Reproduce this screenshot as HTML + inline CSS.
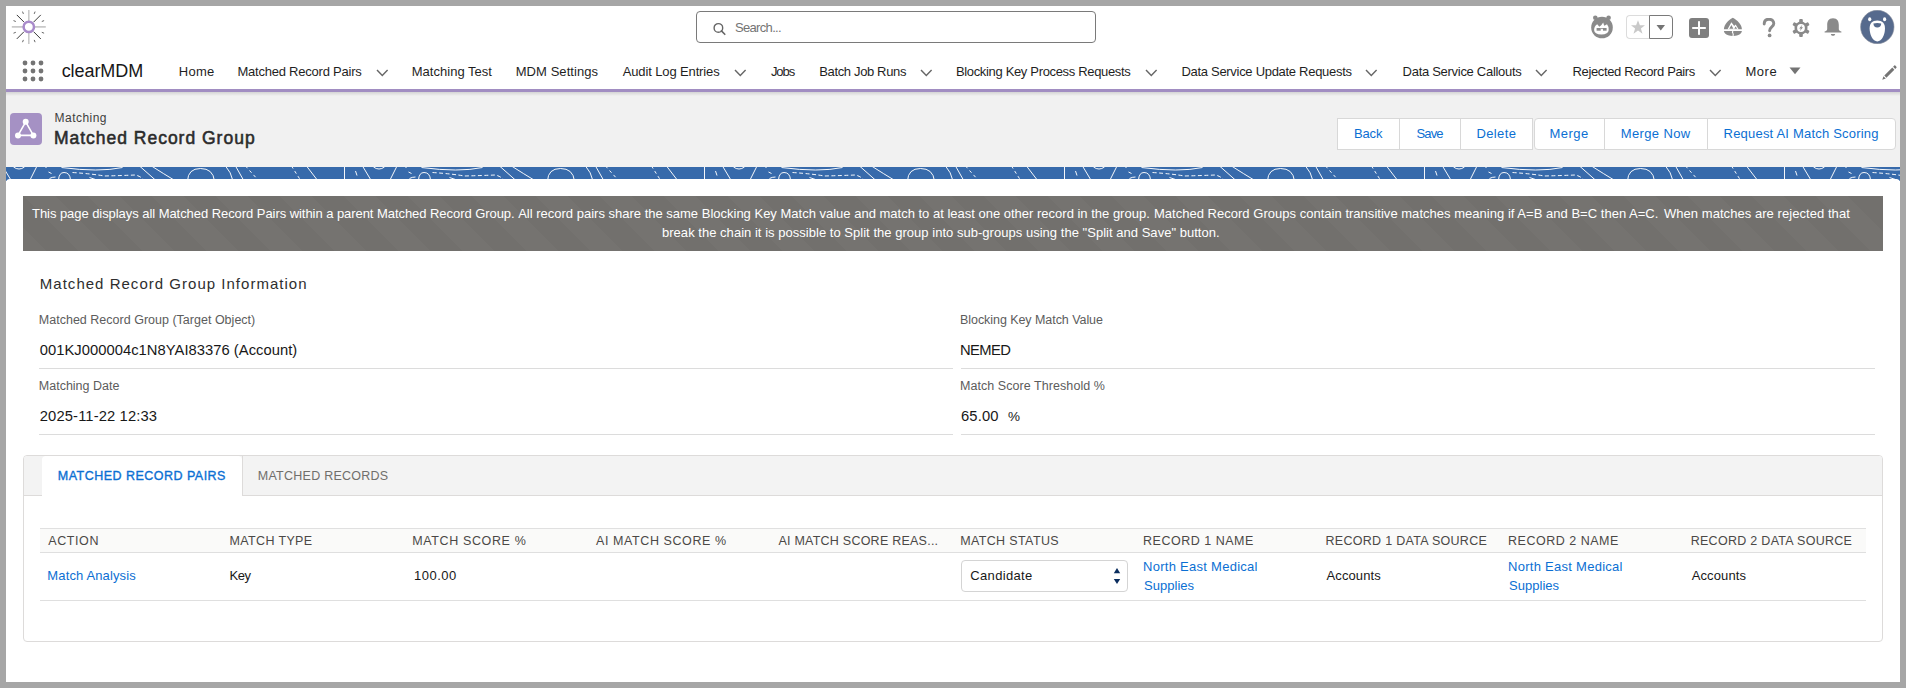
<!DOCTYPE html>
<html><head><meta charset="utf-8">
<style>
html,body{margin:0;padding:0;}
body{width:1906px;height:688px;position:relative;overflow:hidden;background:#ffffff;font-family:"Liberation Sans",sans-serif;}
.a{position:absolute;}
.t{position:absolute;white-space:nowrap;line-height:1;font-family:"Liberation Sans",sans-serif;}
#frame{position:absolute;left:0;top:0;width:1906px;height:688px;box-sizing:border-box;border:6px solid #a6a6a6;z-index:50;pointer-events:none;}
.chev{position:absolute;width:13px;height:8px;}
.btn{position:absolute;top:118px;height:32px;background:#fff;border:1px solid #d8d8d8;box-sizing:border-box;}
</style></head>
<body>
<!-- header -->
<div class="a" style="left:0;top:0;width:1906px;height:89px;background:#fff"></div>
<svg class="a" style="left:8px;top:7px" width="42" height="42" viewBox="0 0 42 42">
  <g transform="translate(20.8,19.9)">
    <line x1="0" y1="-17" x2="0" y2="17" stroke="#c9c9c9" stroke-width="1.6"/>
    <line x1="-17" y1="0" x2="17" y2="0" stroke="#c9c9c9" stroke-width="1.6"/>
    <g stroke="#3a3a3a" stroke-width="1">
      <line x1="-4.8" y1="-4.8" x2="-12" y2="-12"/><line x1="4.8" y1="-4.8" x2="12" y2="-12"/>
      <line x1="-4.8" y1="4.8" x2="-12" y2="12"/><line x1="4.8" y1="4.8" x2="12" y2="12"/>
    </g>
    <g stroke="#555" stroke-width="0.9">
      <line x1="-5.4" y1="-13" x2="-6.3" y2="-15.3"/><line x1="5.4" y1="-13" x2="6.3" y2="-15.3"/>
      <line x1="-5.4" y1="13" x2="-6.3" y2="15.3"/><line x1="5.4" y1="13" x2="6.3" y2="15.3"/>
      <line x1="-13" y1="-5.4" x2="-15.3" y2="-6.3"/><line x1="13" y1="-5.4" x2="15.3" y2="-6.3"/>
      <line x1="-13" y1="5.4" x2="-15.3" y2="6.3"/><line x1="13" y1="5.4" x2="15.3" y2="6.3"/>
    </g>
    <circle cx="0" cy="0" r="5.2" fill="#fff" stroke="#a98bcb" stroke-width="2.5"/>
  </g>
</svg>
<!-- search -->
<div class="a" style="left:696px;top:11px;width:400px;height:32px;box-sizing:border-box;border:1px solid #7a7a7a;border-radius:4px;background:#fff"></div>
<svg class="a" style="left:712px;top:22px" width="16" height="14" viewBox="0 0 16 14">
  <circle cx="6.4" cy="5.9" r="4.3" fill="none" stroke="#666" stroke-width="1.4"/>
  <line x1="9.4" y1="8.9" x2="12.8" y2="12.3" stroke="#666" stroke-width="1.6" stroke-linecap="round"/>
</svg>
<!-- right icons -->
<svg class="a" style="left:1588px;top:12px" width="28" height="28" viewBox="0 0 28 28">
  <circle cx="7.3" cy="5.8" r="2.3" fill="#8a8a8a"/><circle cx="20.6" cy="5.8" r="2.3" fill="#8a8a8a"/>
  <circle cx="14" cy="15.5" r="10.8" fill="#8a8a8a"/>
  <path d="M6.1 18 Q6.3 13.8 9.2 12.3 L11.4 14.7 Q13.6 13.6 15.2 10.6 Q15.8 13 16.4 13.8 L19 12.3 Q20.9 14.5 20.7 18 Q20.3 22.4 13.4 22.6 Q6.4 22.4 6.1 18Z" fill="#fff"/>
  <rect x="8.6" y="16" width="4.1" height="2.7" fill="#8a8a8a"/><rect x="15" y="16" width="3.6" height="2.7" fill="#8a8a8a"/>
  <rect x="12.5" y="16.2" width="2.6" height="0.9" fill="#8a8a8a"/>
</svg>
<div class="a" style="left:1626px;top:15px;width:24px;height:24px;box-sizing:border-box;border:1px solid #dcdcdc;border-right:none;border-radius:4px 0 0 4px;background:#fff"></div>
<div class="a" style="left:1649px;top:15px;width:24px;height:24px;box-sizing:border-box;border:1px solid #7a7a7a;border-radius:0 4px 4px 0;background:#fff"></div>
<svg class="a" style="left:1630px;top:19px" width="16" height="16" viewBox="0 0 16 16">
  <path d="M8 1.2 L9.9 6.3 L15 6.3 L10.9 9.6 L12.5 14.8 L8 11.6 L3.5 14.8 L5.1 9.6 L1 6.3 L6.1 6.3Z" fill="#c9c9c9"/>
</svg>
<svg class="a" style="left:1656px;top:25px" width="10" height="6" viewBox="0 0 10 6"><path d="M0.5 0 L9 0 L4.8 5.5Z" fill="#747474"/></svg>
<svg class="a" style="left:1689px;top:18px" width="20" height="20" viewBox="0 0 20 20">
  <rect x="0" y="0" width="20" height="20" rx="3" fill="#7f7f7f"/>
  <rect x="3.2" y="9" width="13.6" height="2" fill="#fff"/><rect x="9" y="3.2" width="2" height="13.6" fill="#fff"/>
</svg>
<svg class="a" style="left:1719px;top:13px" width="28" height="28" viewBox="0 0 28 28">
  <path d="M13.8 4.8 C9 7.4 5.1 11.5 4.9 16.3 L22.9 16.3 C22.7 11.5 18.6 7.4 13.8 4.8Z" fill="#8a8a8a"/>
  <path d="M8.4 16.4 L12.4 9.3 L15.2 13.1 L16.6 11.5 L19.8 16.4Z" fill="#fff"/>
  <path d="M10.3 15.7 L12.4 11.9 L14.4 15.7Z M15.3 15.7 L16.6 13.5 L18.2 15.7Z" fill="#8a8a8a"/>
  <path d="M4.9 17.9 L13.3 17.9 L12.8 19.3 L13.7 21 L13.5 22.9 C8.4 22.7 5.3 20.6 4.9 17.9Z" fill="#8a8a8a"/>
  <path d="M22.9 17.9 L14.3 17.9 L14.1 19.4 L14.8 21.2 L14.6 22.9 C19.6 22.7 22.5 20.6 22.9 17.9Z" fill="#8a8a8a"/>
</svg>
<svg class="a" style="left:1761px;top:17.8px" width="16" height="20" viewBox="0 0 16 20">
  <path d="M3.2 6 C3.2 2.5 5.5 1.2 8 1.2 C10.8 1.2 12.8 3 12.8 5.6 C12.8 9 8.6 9 8.6 12.8" fill="none" stroke="#8a8a8a" stroke-width="2.9" stroke-linecap="round"/>
  <circle cx="8.6" cy="17.4" r="1.9" fill="#8a8a8a"/>
</svg>
<svg class="a" style="left:1792px;top:19px" width="18" height="18" viewBox="0 0 18 18">
  <g fill="#8a8a8a" transform="translate(9,9)">
    <circle r="6.5"/>
    <rect x="-1.8" y="-9" width="3.6" height="18" rx="1"/>
    <rect x="-1.8" y="-9" width="3.6" height="18" rx="1" transform="rotate(60)"/>
    <rect x="-1.8" y="-9" width="3.6" height="18" rx="1" transform="rotate(120)"/>
  </g>
  <circle cx="9" cy="9" r="3.9" fill="#fff"/>
  <path d="M10.3 5.8 L7.2 9.6 L8.9 9.6 L7.8 12.3 L11 8.3 L9.3 8.3Z" fill="#8a8a8a"/>
</svg>
<svg class="a" style="left:1823px;top:17px" width="20" height="20" viewBox="0 0 20 20">
  <path d="M10 1.2 C5.5 1.2 4.2 4.5 4.2 8 L4.2 12.2 C4.2 13.5 2.8 14.2 1.6 14.6 L1.6 15.6 L18.4 15.6 L18.4 14.6 C17.2 14.2 15.8 13.5 15.8 12.2 L15.8 8 C15.8 4.5 14.5 1.2 10 1.2Z" fill="#8a8a8a"/>
  <path d="M7.8 17 L12.2 17 C12 18.3 11 18.8 10 18.8 C9 18.8 8 18.3 7.8 17Z" fill="#8a8a8a"/>
</svg>
<svg class="a" style="left:1860px;top:10px" width="35" height="34" viewBox="0 0 35 34">
  <circle cx="17.3" cy="17" r="16.7" fill="#566a8d" stroke="#8a8f9c" stroke-width="0.6"/>
  <ellipse cx="9.7" cy="9.2" rx="1.6" ry="2" fill="#fff"/><ellipse cx="24.6" cy="9.2" rx="1.6" ry="2" fill="#fff"/>
  <path d="M17.3 10.6 C12.2 10.6 9.6 13.5 9.6 18.5 C9.6 24.5 12.8 31.4 17.3 31.4 C21.8 31.4 25 24.5 25 18.5 C25 13.5 22.4 10.6 17.3 10.6Z" fill="#fff"/>
  <path d="M13.4 13.6 Q17.3 12.4 21.2 13.6 Q21 17.6 17.3 17.6 Q13.6 17.6 13.4 13.6Z" fill="#566a8d"/>
</svg>
<!-- nav -->
<svg class="a" style="left:22px;top:60px" width="22" height="22" viewBox="0 0 22 22">
  <g fill="#747474">
    <circle cx="3" cy="3" r="2.4"/><circle cx="11" cy="3" r="2.4"/><circle cx="19" cy="3" r="2.4"/>
    <circle cx="3" cy="11" r="2.4"/><circle cx="11" cy="11" r="2.4"/><circle cx="19" cy="11" r="2.4"/>
    <circle cx="3" cy="19" r="2.4"/><circle cx="11" cy="19" r="2.4"/><circle cx="19" cy="19" r="2.4"/>
  </g>
</svg>
<svg class="a" style="left:375.6px;top:69px" width="13" height="8" viewBox="0 0 13 8"><path d="M1 1 L6.3 6.6 L11.6 1" fill="none" stroke="#666" stroke-width="1.4"/></svg>
<svg class="a" style="left:734.2px;top:69px" width="13" height="8" viewBox="0 0 13 8"><path d="M1 1 L6.3 6.6 L11.6 1" fill="none" stroke="#666" stroke-width="1.4"/></svg>
<svg class="a" style="left:919.9px;top:69px" width="13" height="8" viewBox="0 0 13 8"><path d="M1 1 L6.3 6.6 L11.6 1" fill="none" stroke="#666" stroke-width="1.4"/></svg>
<svg class="a" style="left:1145.1px;top:69px" width="13" height="8" viewBox="0 0 13 8"><path d="M1 1 L6.3 6.6 L11.6 1" fill="none" stroke="#666" stroke-width="1.4"/></svg>
<svg class="a" style="left:1365.0px;top:69px" width="13" height="8" viewBox="0 0 13 8"><path d="M1 1 L6.3 6.6 L11.6 1" fill="none" stroke="#666" stroke-width="1.4"/></svg>
<svg class="a" style="left:1534.8px;top:69px" width="13" height="8" viewBox="0 0 13 8"><path d="M1 1 L6.3 6.6 L11.6 1" fill="none" stroke="#666" stroke-width="1.4"/></svg>
<svg class="a" style="left:1708.7px;top:69px" width="13" height="8" viewBox="0 0 13 8"><path d="M1 1 L6.3 6.6 L11.6 1" fill="none" stroke="#666" stroke-width="1.4"/></svg>
<svg class="a" style="left:1789px;top:67px" width="12" height="8" viewBox="0 0 12 8"><path d="M0.5 0.5 L11.5 0.5 L6 7.2Z" fill="#747474"/></svg>
<svg class="a" style="left:1881px;top:65px" width="16" height="16" viewBox="0 0 16 16">
  <path d="M11.3 2.6 L13.4 4.7 L5.4 12.7 L3.3 10.6Z" fill="#747474"/><path d="M12.1 1.8 L13.3 0.6 Q13.8 0.1 14.3 0.6 L15.4 1.7 Q15.9 2.2 15.4 2.7 L14.2 3.9Z" fill="#747474"/>
  <path d="M2.4 11.2 L4.8 13.6 L1.3 14.8Z" fill="#747474"/>
</svg>
<div class="a" style="left:0;top:89px;width:1906px;height:3px;background:#a18dc2"></div>
<!-- page header bg -->
<div class="a" style="left:0;top:92px;width:1906px;height:75px;background:#f1f1f1"></div>
<div class="a" style="left:0;top:92px;width:1906px;height:4px;background:linear-gradient(rgba(0,0,0,0.12),rgba(0,0,0,0))"></div>
<svg class="a" style="left:10px;top:113px" width="32" height="32" viewBox="0 0 32 32">
  <rect width="32" height="32" rx="4" fill="#a591c4"/>
  <path d="M15.7 8.8 L8 22.4 L23.4 22.4Z" fill="none" stroke="#fff" stroke-width="1.6"/>
  <circle cx="15.7" cy="8.8" r="3" fill="#fff"/><circle cx="8" cy="22.4" r="3" fill="#fff"/><circle cx="23.4" cy="22.4" r="3" fill="#fff"/>
</svg>
<!-- buttons -->
<div class="btn" style="left:1337px;width:63px;"></div>
<div class="btn" style="left:1399px;width:62px;"></div>
<div class="btn" style="left:1460px;width:73px;"></div>
<div class="btn" style="left:1534px;width:71px;border-radius:4px 0 0 4px"></div>
<div class="btn" style="left:1604px;width:104px;"></div>
<div class="btn" style="left:1707px;width:189px;border-radius:0 4px 4px 0"></div>
<!-- brand band -->
<div class="a" style="left:0;top:167px;width:1906px;height:14px;background:#376aab;overflow:hidden">
<svg width="1906" height="14" style="position:absolute;left:0;top:0">
<defs><pattern id="topo" x="344" y="0" width="360" height="14" patternUnits="userSpaceOnUse">
<g fill="none" stroke="#ffffff" stroke-opacity="0.95" stroke-width="1">
<path d="M0.5 -1 L0.5 14"/>
<path d="M11.5 4 L13 8.5"/>
<path d="M18.5 -1 L27.5 14"/>
<path d="M29.5 0 Q35 4 40.5 0"/>
<path d="M53 -1 L45.5 14"/>
<path d="M62 -1 L62 1"/>
<path d="M64.5 5 L67.5 6.5"/>
<path d="M74.5 13 Q75 5.5 80 5.5 Q86 5.5 86.5 13"/>
<path d="M65.5 11.5 Q68 10 71.5 10"/>
<path d="M77.5 0.5 Q115 5.5 138.5 0.5"/>
<path d="M88.5 5.5 Q110 7 120 9 Q140 8.5 151.5 8 Q157 9.5 160 13" stroke-dasharray="4 2.5"/>
<path d="M105.5 10.5 L113 13"/>
<path d="M155.5 -1 L172.5 14"/>
<path d="M167.5 -1 Q180 7 190 13"/>
<path d="M203.5 14 Q204 1.5 216.5 1.5 Q229 1.5 230.5 14"/>
<path d="M241.5 -1 Q247 5 249 14"/>
<path d="M251.5 -1 L260 14"/>
<path d="M261.5 -1 L275 14" stroke-dasharray="3 3"/>
<path d="M307.5 -1 L317 14" stroke-dasharray="3 3"/>
<path d="M322.5 -1 L334 14"/>
</g></pattern></defs>
<rect x="0" y="0" width="1906" height="14" fill="url(#topo)"/>
</svg>

</div>
<!-- card -->
<div class="a" style="left:6px;top:179px;width:1894px;height:520px;background:#fff;border-radius:4px 4px 0 0"></div>
<!-- info box -->
<div class="a" style="left:23px;top:196px;width:1860px;height:55px;background-color:#72706d;background-image:linear-gradient(45deg,rgba(255,255,255,0.025) 25%,transparent 25%,transparent 50%,rgba(255,255,255,0.025) 50%,rgba(255,255,255,0.025) 75%,transparent 75%,transparent);background-size:64px 64px"></div>
<!-- field dividers -->
<div class="a" style="left:39px;top:368px;width:914px;height:1px;background:#dcdcdc"></div>
<div class="a" style="left:961px;top:368px;width:914px;height:1px;background:#dcdcdc"></div>
<div class="a" style="left:39px;top:434px;width:914px;height:1px;background:#dcdcdc"></div>
<div class="a" style="left:961px;top:434px;width:914px;height:1px;background:#dcdcdc"></div>
<!-- tabset -->
<div class="a" style="left:23px;top:455px;width:1860px;height:187px;box-sizing:border-box;border:1px solid #dddbda;border-radius:4px;background:#fff"></div>
<div class="a" style="left:24px;top:456px;width:1858px;height:39px;background:#f3f3f3;border-radius:3px 3px 0 0"></div>
<div class="a" style="left:24px;top:495px;width:1858px;height:1px;background:#dddbda"></div>
<div class="a" style="left:42px;top:456px;width:200px;height:40px;background:#fff;border-radius:4px 4px 0 0"></div>
<div class="a" style="left:242px;top:456px;width:1px;height:40px;background:#dddbda"></div>
<!-- table -->
<div class="a" style="left:40px;top:528px;width:1826px;height:1px;background:#e0e0e0"></div>
<div class="a" style="left:40px;top:529px;width:1826px;height:23px;background:#fafaf9"></div>
<div class="a" style="left:40px;top:552px;width:1826px;height:1px;background:#dfdfdf"></div>
<div class="a" style="left:40px;top:600px;width:1826px;height:1px;background:#dfdfdf"></div>
<!-- select -->
<div class="a" style="left:961px;top:560px;width:167px;height:32px;box-sizing:border-box;border:1px solid #d4d4d4;border-radius:4px;background:#fff"></div>
<svg class="a" style="left:1113px;top:567px" width="8" height="18" viewBox="0 0 8 18">
  <path d="M0.8 6.2 L7.2 6.2 L4 1Z" fill="#0a2d5e"/><path d="M0.8 11.9 L7.2 11.9 L4 17Z" fill="#0a2d5e"/>
</svg>
<div class="t" style="left:735.00px;top:21.39px;font-size:13px;color:#747474;letter-spacing:-0.677px">Search...</div>
<div class="t" style="left:61.70px;top:61.66px;font-size:18px;color:#181818;letter-spacing:-0.073px">clearMDM</div>
<div class="t" style="left:178.80px;top:64.79px;font-size:13px;color:#1f1f1f;letter-spacing:0.251px">Home</div>
<div class="t" style="left:237.40px;top:64.79px;font-size:13px;color:#1f1f1f;letter-spacing:-0.222px">Matched Record Pairs</div>
<div class="t" style="left:411.70px;top:64.79px;font-size:13px;color:#1f1f1f;letter-spacing:0.026px">Matching Test</div>
<div class="t" style="left:515.70px;top:64.79px;font-size:13px;color:#1f1f1f;letter-spacing:0.070px">MDM Settings</div>
<div class="t" style="left:622.70px;top:64.79px;font-size:13px;color:#1f1f1f;letter-spacing:-0.125px">Audit Log Entries</div>
<div class="t" style="left:770.90px;top:64.79px;font-size:13px;color:#1f1f1f;letter-spacing:-1.020px">Jobs</div>
<div class="t" style="left:819.30px;top:64.79px;font-size:13px;color:#1f1f1f;letter-spacing:-0.360px">Batch Job Runs</div>
<div class="t" style="left:955.90px;top:64.79px;font-size:13px;color:#1f1f1f;letter-spacing:-0.334px">Blocking Key Process Requests</div>
<div class="t" style="left:1181.40px;top:64.79px;font-size:13px;color:#1f1f1f;letter-spacing:-0.292px">Data Service Update Requests</div>
<div class="t" style="left:1402.60px;top:64.79px;font-size:13px;color:#1f1f1f;letter-spacing:-0.290px">Data Service Callouts</div>
<div class="t" style="left:1572.60px;top:64.79px;font-size:13px;color:#1f1f1f;letter-spacing:-0.368px">Rejected Record Pairs</div>
<div class="t" style="left:1745.40px;top:64.79px;font-size:13px;color:#1f1f1f;letter-spacing:0.537px">More</div>
<div class="t" style="left:54.60px;top:111.54px;font-size:12px;color:#3e3e3c;letter-spacing:0.455px">Matching</div>
<div class="t" style="left:53.90px;top:129.78px;font-size:17.5px;color:#2b2b2b;letter-spacing:0.991px;-webkit-text-stroke:0.55px #2b2b2b">Matched Record Group</div>
<div class="t" style="left:1354.10px;top:127.09px;font-size:13px;color:#0b6fd3;letter-spacing:-0.200px">Back</div>
<div class="t" style="left:1416.50px;top:127.09px;font-size:13px;color:#0b6fd3;letter-spacing:-0.867px">Save</div>
<div class="t" style="left:1476.40px;top:127.09px;font-size:13px;color:#0b6fd3;letter-spacing:0.390px">Delete</div>
<div class="t" style="left:1549.60px;top:127.09px;font-size:13px;color:#0b6fd3;letter-spacing:0.445px">Merge</div>
<div class="t" style="left:1620.70px;top:127.09px;font-size:13px;color:#0b6fd3;letter-spacing:0.378px">Merge Now</div>
<div class="t" style="left:1723.60px;top:127.09px;font-size:13px;color:#0b6fd3;letter-spacing:0.196px">Request AI Match Scoring</div>
<div class="t" style="left:32.00px;top:206.89px;font-size:13px;color:#ffffff;letter-spacing:-0.055px">This page displays all Matched Record Pairs within a parent Matched Record Group.</div>
<div class="t" style="left:518.20px;top:206.89px;font-size:13px;color:#ffffff">All record pairs share the same Blocking Key Match value and match to at least one other record in the group.</div>
<div class="t" style="left:1153.90px;top:206.89px;font-size:13px;color:#ffffff;letter-spacing:0.024px">Matched Record Groups contain transitive matches meaning if A=B and B=C then A=C.</div>
<div class="t" style="left:1663.90px;top:206.89px;font-size:13px;color:#ffffff;letter-spacing:0.057px">When matches are rejected that</div>
<div class="t" style="left:662.00px;top:225.89px;font-size:13px;color:#ffffff;letter-spacing:0.028px">break the chain it is possible to Split the group into sub-groups using the &quot;Split and Save&quot; button.</div>
<div class="t" style="left:39.80px;top:275.60px;font-size:15px;color:#2e2e2e;letter-spacing:1.020px">Matched Record Group Information</div>
<div class="t" style="left:38.80px;top:314.02px;font-size:12.5px;color:#5c5c5c;letter-spacing:0.011px">Matched Record Group (Target Object)</div>
<div class="t" style="left:39.80px;top:342.51px;font-size:14.75px;color:#181818;letter-spacing:0.032px">001KJ000004c1N8YAI83376 (Account)</div>
<div class="t" style="left:38.80px;top:379.72px;font-size:12.5px;color:#5c5c5c">Matching Date</div>
<div class="t" style="left:39.80px;top:409.01px;font-size:14.75px;color:#181818;letter-spacing:0.123px">2025-11-22 12:33</div>
<div class="t" style="left:960.00px;top:314.02px;font-size:12.5px;color:#5c5c5c;letter-spacing:-0.058px">Blocking Key Match Value</div>
<div class="t" style="left:960.00px;top:342.51px;font-size:14.75px;color:#181818;letter-spacing:-0.579px">NEMED</div>
<div class="t" style="left:960.00px;top:379.72px;font-size:12.5px;color:#5c5c5c;letter-spacing:0.059px">Match Score Threshold %</div>
<div class="t" style="left:961.00px;top:409.01px;font-size:14.75px;color:#181818;letter-spacing:0.148px">65.00</div>
<div class="t" style="left:1008.00px;top:410.27px;font-size:13.5px;color:#181818">%</div>
<div class="t" style="left:57.80px;top:469.72px;font-size:12.5px;color:#0b6fd3;letter-spacing:0.477px;-webkit-text-stroke:0.35px #0b6fd3">MATCHED RECORD PAIRS</div>
<div class="t" style="left:257.80px;top:469.72px;font-size:12.5px;color:#706e6b;letter-spacing:0.249px">MATCHED RECORDS</div>
<div class="t" style="left:48.30px;top:534.62px;font-size:12.5px;color:#4a4846;letter-spacing:0.581px">ACTION</div>
<div class="t" style="left:229.60px;top:534.62px;font-size:12.5px;color:#4a4846;letter-spacing:0.345px">MATCH TYPE</div>
<div class="t" style="left:412.20px;top:534.62px;font-size:12.5px;color:#4a4846;letter-spacing:0.633px">MATCH SCORE %</div>
<div class="t" style="left:596.00px;top:534.62px;font-size:12.5px;color:#4a4846;letter-spacing:0.587px">AI MATCH SCORE %</div>
<div class="t" style="left:778.40px;top:534.62px;font-size:12.5px;color:#4a4846;letter-spacing:0.239px">AI MATCH SCORE REAS...</div>
<div class="t" style="left:960.20px;top:534.62px;font-size:12.5px;color:#4a4846;letter-spacing:0.363px">MATCH STATUS</div>
<div class="t" style="left:1143.00px;top:534.62px;font-size:12.5px;color:#4a4846;letter-spacing:0.513px">RECORD 1 NAME</div>
<div class="t" style="left:1325.50px;top:534.62px;font-size:12.5px;color:#4a4846;letter-spacing:0.291px">RECORD 1 DATA SOURCE</div>
<div class="t" style="left:1508.00px;top:534.62px;font-size:12.5px;color:#4a4846;letter-spacing:0.513px">RECORD 2 NAME</div>
<div class="t" style="left:1690.70px;top:534.62px;font-size:12.5px;color:#4a4846;letter-spacing:0.286px">RECORD 2 DATA SOURCE</div>
<div class="t" style="left:47.30px;top:568.89px;font-size:13px;color:#0b6fd3;letter-spacing:0.137px">Match Analysis</div>
<div class="t" style="left:229.60px;top:568.89px;font-size:13px;color:#181818;letter-spacing:-0.500px">Key</div>
<div class="t" style="left:414.00px;top:568.89px;font-size:13px;color:#181818;letter-spacing:0.494px">100.00</div>
<div class="t" style="left:970.30px;top:568.99px;font-size:13px;color:#181818;letter-spacing:0.333px">Candidate</div>
<div class="t" style="left:1143.00px;top:559.59px;font-size:13px;color:#0b6fd3;letter-spacing:0.275px">North East Medical</div>
<div class="t" style="left:1144.00px;top:579.29px;font-size:13px;color:#0b6fd3;letter-spacing:0.033px">Supplies</div>
<div class="t" style="left:1326.50px;top:568.79px;font-size:13px;color:#181818;letter-spacing:0.118px">Accounts</div>
<div class="t" style="left:1508.00px;top:559.59px;font-size:13px;color:#0b6fd3;letter-spacing:0.275px">North East Medical</div>
<div class="t" style="left:1509.00px;top:579.29px;font-size:13px;color:#0b6fd3;letter-spacing:0.033px">Supplies</div>
<div class="t" style="left:1691.70px;top:568.79px;font-size:13px;color:#181818;letter-spacing:0.118px">Accounts</div>
<div id="frame"></div>
</body></html>
